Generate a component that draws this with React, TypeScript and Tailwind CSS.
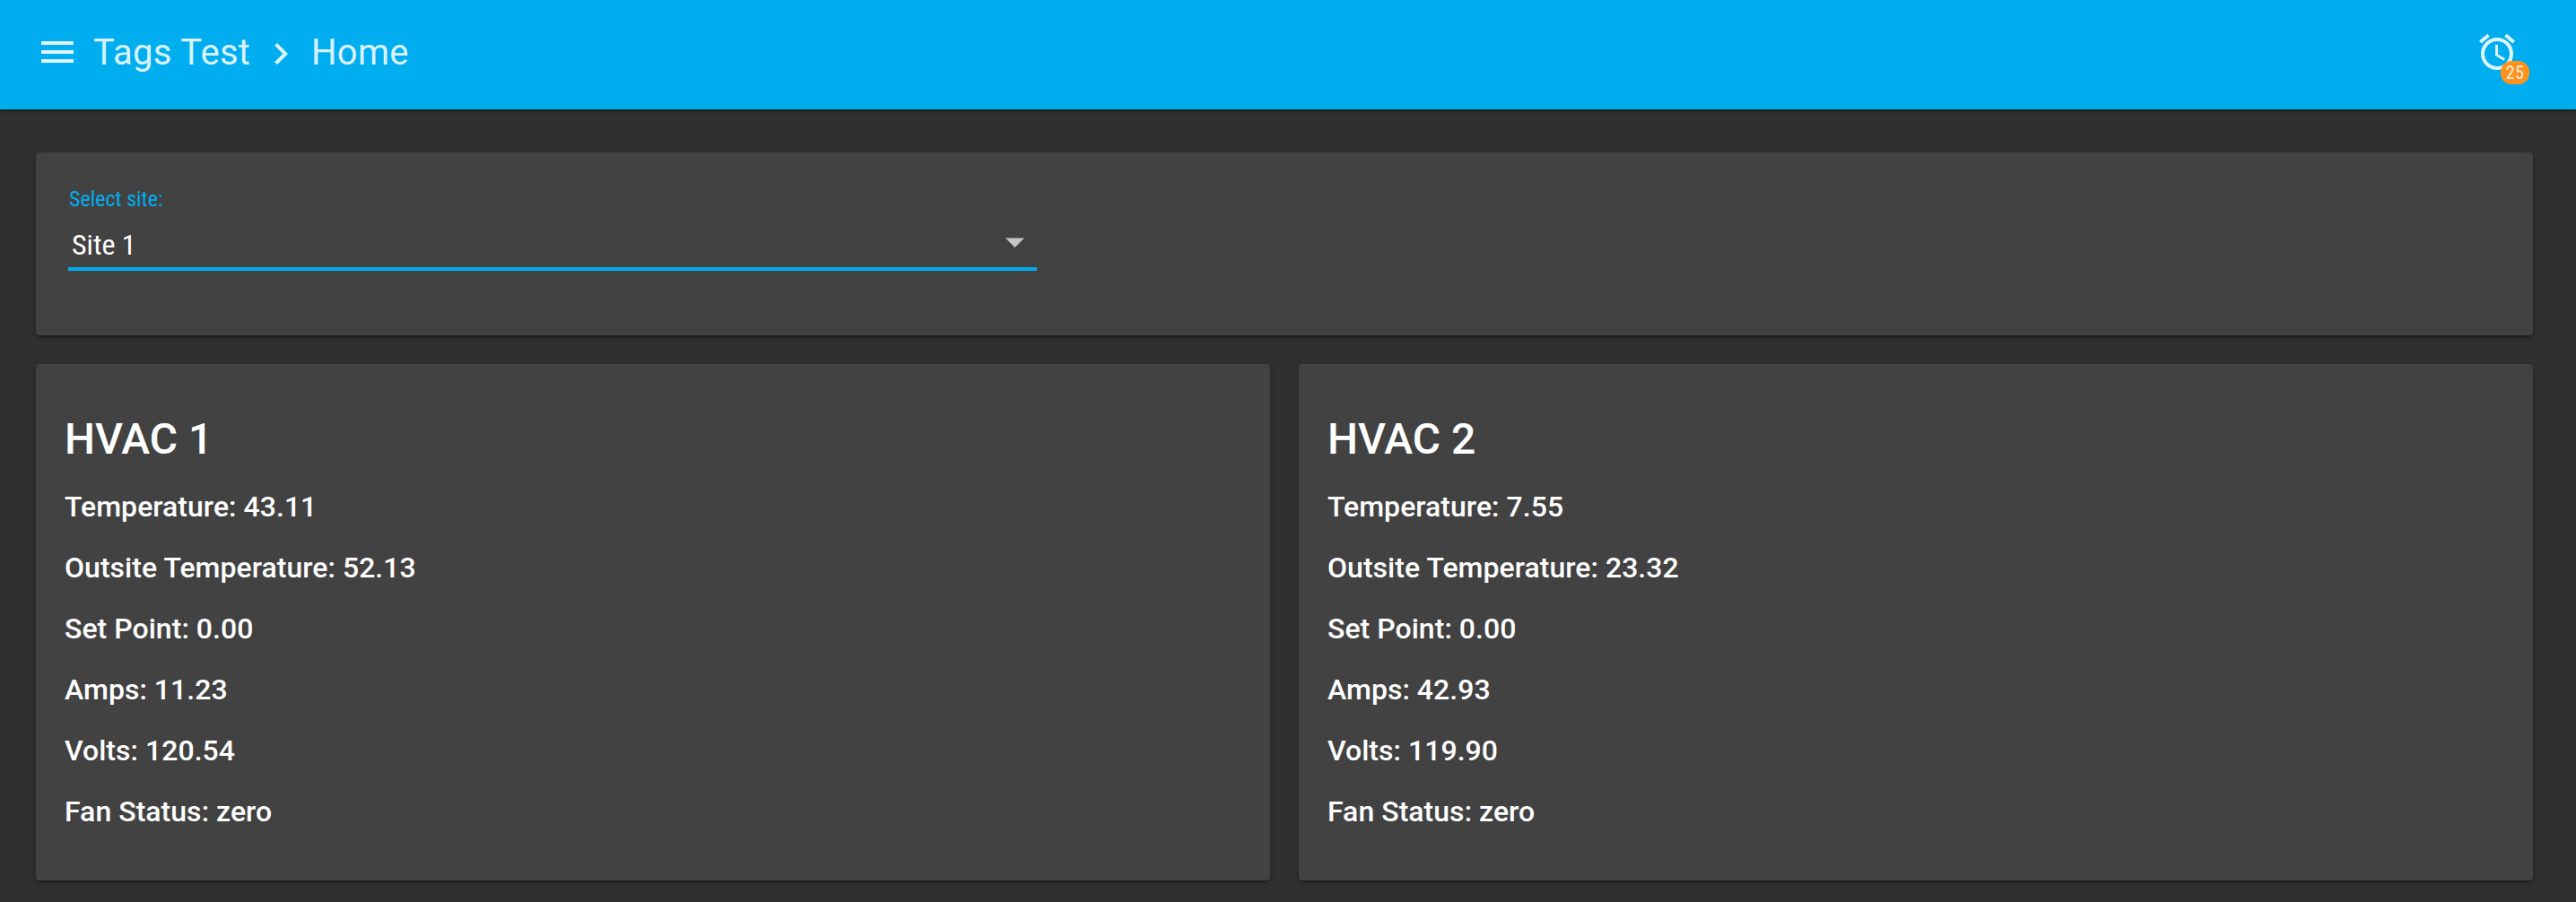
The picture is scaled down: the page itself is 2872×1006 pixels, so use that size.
import type { ReactNode } from 'react';

const CARD =
  'rounded-[4px] bg-[#424242] shadow-[0_2px_6px_0_rgba(0,0,0,0.2),0_2px_2px_0_rgba(0,0,0,0.14),0_4px_2px_-2px_rgba(0,0,0,0.12)]';

type Device = { name: string; readings: [string, string][] };

const devices: Device[] = [
  {
    name: 'HVAC 1',
    readings: [
      ['Temperature', '43.11'],
      ['Outsite Temperature', '52.13'],
      ['Set Point', '0.00'],
      ['Amps', '11.23'],
      ['Volts', '120.54'],
      ['Fan Status', 'zero'],
    ],
  },
  {
    name: 'HVAC 2',
    readings: [
      ['Temperature', '7.55'],
      ['Outsite Temperature', '23.32'],
      ['Set Point', '0.00'],
      ['Amps', '42.93'],
      ['Volts', '119.90'],
      ['Fan Status', 'zero'],
    ],
  },
];

function Icon({ d, className = '' }: { d: string; className?: string }) {
  return (
    <svg viewBox="0 0 24 24" className={`size-12 shrink-0 fill-current ${className}`}>
      <path d={d} />
    </svg>
  );
}

function Condensed({ children, className = '' }: { children: ReactNode; className?: string }) {
  return (
    <span
      className={`inline-block whitespace-nowrap font-['Roboto_Condensed','Roboto',sans-serif] [font-stretch:75%] ${className}`}
    >
      {children}
    </span>
  );
}

function Header() {
  return (
    <header className="flex h-[122px] items-start bg-[#00aef0] pl-10 pr-16 pt-[34px] text-white/[0.87] shadow-[0_2px_6px_0_rgba(0,0,0,0.2),0_2px_2px_0_rgba(0,0,0,0.14),0_4px_2px_-2px_rgba(0,0,0,0.12)]">
      <Icon d="M3 18h18v-2H3v2zm0-5h18v-2H3v2zm0-7v2h18V6H3z" />
      <div className="flex pl-4 pt-px text-[40px] leading-[48px] tracking-[0.3px]">
        <span className="w-[185px]">Tags Test</span>
        <Icon className="mt-px" d="M10 6L8.59 7.41 13.17 12l-4.58 4.59L10 18l6-6z" />
        <span className="pl-2.5">Home</span>
      </div>
      <div className="relative ml-auto">
        <Icon d="M22 5.72l-4.6-3.86-1.29 1.53 4.6 3.86L22 5.72zM7.88 3.39L6.6 1.86 2 5.71l1.29 1.53 4.59-3.85zM12.5 8H11v6l4.75 2.85.75-1.23-4-2.37V8zM12 4c-4.97 0-9 4.03-9 9s4.02 9 9 9c4.97 0 9-4.03 9-9s-4.03-9-9-9zm0 16c-3.87 0-7-3.13-7-7s3.13-7 7-7 7 3.13 7 7-3.13 7-7 7z" />
        <div className="absolute left-7 top-[34px] flex h-[26px] w-8 justify-center rounded-[12px] bg-[#ff931e]">
          <Condensed className="text-[20px] leading-[26px] tracking-[0.4px]">25</Condensed>
        </div>
      </div>
    </header>
  );
}

function SiteSelect() {
  return (
    <section className={`h-[204px] px-9 pt-9 ${CARD}`}>
      <div className="w-[1080px] border-b-4 border-[#00aef0]">
        <div className="h-8 pl-px text-[#00aef0]">
          <Condensed className="text-[24px] leading-8">Select site:</Condensed>
        </div>
        <div className="flex h-[60px] items-center justify-between pl-1 pr-[13px] pt-2.5">
          <Condensed className="text-[32px] leading-[48px]">Site 1</Condensed>
          <svg viewBox="0 0 22 11" className="-mt-[5px] h-[11px] w-[22px] fill-[#c6c6c6]">
            <path d="M0 0.4h21L10.5 11z" />
          </svg>
        </div>
      </div>
    </section>
  );
}

function DeviceCard({ device }: { device: Device }) {
  return (
    <section className={`h-[576px] flex-1 px-8 pt-[60px] font-medium ${CARD}`}>
      <h2 className="mb-[17px] text-[48px] leading-[48px]">{device.name}</h2>
      {device.readings.map(([label, value]) => (
        <p key={label} className="text-[32px] leading-[68px] tracking-[0.03px]">
          {label}: {value}
        </p>
      ))}
    </section>
  );
}

export default function App() {
  return (
    <div className="min-h-[1006px] w-full bg-[#303030] font-['Roboto',sans-serif] text-white antialiased">
      <Header />
      <main className="flex flex-col gap-8 pl-10 pr-12 pt-12">
        <SiteSelect />
        <div className="flex gap-8">
          {devices.map((device) => (
            <DeviceCard key={device.name} device={device} />
          ))}
        </div>
      </main>
    </div>
  );
}
